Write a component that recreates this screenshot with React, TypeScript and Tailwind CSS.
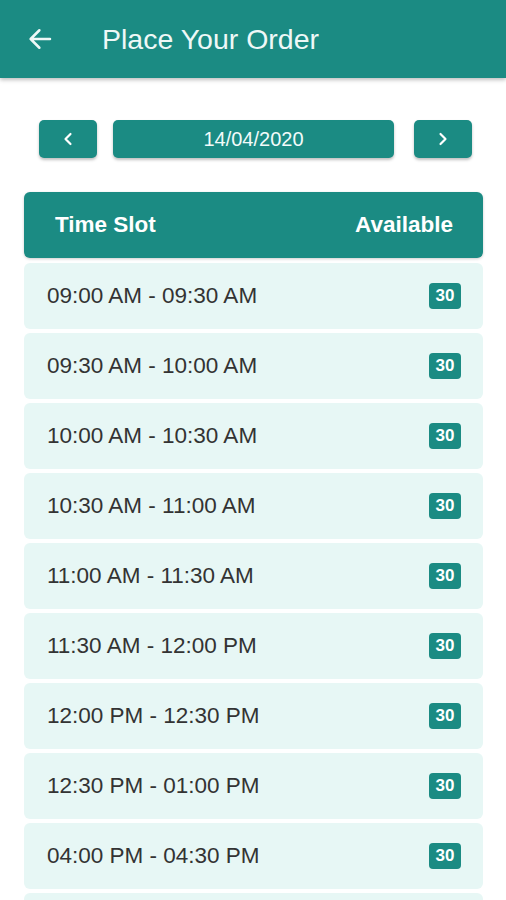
import { ChevronLeft, ChevronRight } from "lucide-react";

const slots = [
  "09:00 AM - 09:30 AM",
  "09:30 AM - 10:00 AM",
  "10:00 AM - 10:30 AM",
  "10:30 AM - 11:00 AM",
  "11:00 AM - 11:30 AM",
  "11:30 AM - 12:00 PM",
  "12:00 PM - 12:30 PM",
  "12:30 PM - 01:00 PM",
  "04:00 PM - 04:30 PM",
  "04:30 PM - 05:00 PM",
];

export default function App() {
  return (
    <div className="h-[900px] overflow-hidden bg-white [font-family:'Liberation_Sans',Arial,sans-serif]">
      {/* App bar */}
      <div className="h-[78px] bg-[#1b8b83] flex items-center shadow-[0_2px_4px_rgba(0,0,0,0.25)] relative z-10">
        <svg width="30" height="30" viewBox="0 0 24 24" className="ml-[25px] text-[#eef8f7]">
          <path d="M20 12H4.5M11.5 5L4.5 12l7 7" fill="none" stroke="currentColor" strokeWidth="2" strokeLinecap="round" strokeLinejoin="round" />
        </svg>
        <h1 className="ml-[47px] text-[28.5px] text-[#eef8f7]">Place Your Order</h1>
      </div>

      {/* Date picker */}
      <div className="flex items-center pt-[42px] pl-[39px] pr-[34px]">
        <button className="w-[58px] h-[38px] rounded-[5px] bg-[#1b8b83] flex items-center justify-center shadow-[0_2px_3px_rgba(0,0,0,0.25)]">
          <ChevronLeft size={20} strokeWidth={2.6} className="text-white" />
        </button>
        <div className="ml-[16px] w-[281px] h-[38px] rounded-[5px] bg-[#1b8b83] flex items-center justify-center text-[20px] text-[#f2fbfa] shadow-[0_2px_3px_rgba(0,0,0,0.25)]">
          14/04/2020
        </div>
        <button className="ml-[20px] w-[58px] h-[38px] rounded-[5px] bg-[#1b8b83] flex items-center justify-center shadow-[0_2px_3px_rgba(0,0,0,0.25)]">
          <ChevronRight size={20} strokeWidth={2.6} className="text-white" />
        </button>
      </div>

      {/* Table */}
      <div className="mx-[24px] mt-[34px] w-[459px]">
        <div className="h-[66px] rounded-[6px] bg-[#1b8b83] flex items-center justify-between pl-[31px] pr-[30px] text-[22.5px] font-bold text-white shadow-[0_1px_3px_rgba(0,0,0,0.2)]">
          <span>Time Slot</span>
          <span>Available</span>
        </div>
        <div className="mt-[5px] flex flex-col gap-[4px]">
          {slots.map((s) => (
            <div key={s} className="h-[66px] rounded-[6px] bg-[#e7f7f5] flex items-center justify-between pl-[23px] pr-[22px]">
              <span className="text-[22.5px] text-[#333333]">{s}</span>
              <span className="w-[32px] h-[26px] rounded-[4px] bg-[#1b8b83] text-white text-[17px] font-bold flex items-center justify-center">30</span>
            </div>
          ))}
        </div>
      </div>
    </div>
  );
}
